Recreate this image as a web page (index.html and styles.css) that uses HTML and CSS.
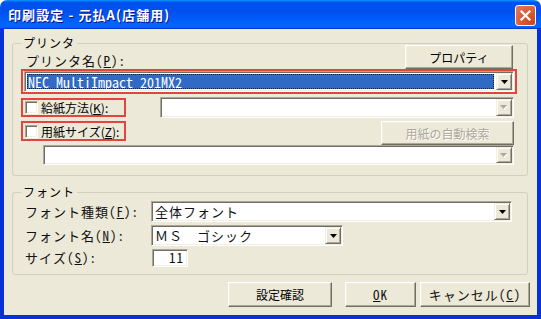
FILE: index.html
```html
<!DOCTYPE html>
<html lang="ja">
<head>
<meta charset="utf-8">
<title>印刷設定</title>
<link rel="stylesheet" href="styles.css">
</head>
<body>
<div class="window">
  <div class="titlebar">
    <span class="title">印刷設定 - 元払A(店舗用)</span>
    <span class="close"><svg width="13" height="13" viewBox="0 0 13 13"><path d="M2.5 2.5 L10.5 10.5 M10.5 2.5 L2.5 10.5" stroke="#fff" stroke-width="2.2" stroke-linecap="square"/></svg></span>
  </div>
  <div class="client">
    <section class="group g1">
      <span class="legend">プリンタ</span>
      <div class="row1">
        <span class="g lbl">プリンタ名(<u>P</u>):</span>
        <span class="btn btn-prop p">プロパティ</span>
      </div>
      <div class="hl combo-hl">
        <div class="combo c-printer">
          <div class="field sel"><span class="mono">NEC MultiImpact 201MX2</span></div>
          <span class="drop"><svg width="7" height="4" viewBox="0 0 7 4"><path d="M0 0H7L3.5 4Z" fill="#000"/></svg></span>
        </div>
      </div>
      <div class="row2">
        <div class="hl chk-hl"><span class="chk"></span><span class="p">給紙方法(<u>K</u>):</span></div>
        <div class="combo c-feed"><div class="field"></div><span class="drop"><svg width="8" height="5" viewBox="0 0 8 5"><path d="M1 1H8L4.5 5Z" fill="#fff"/><path d="M0 0H7L3.5 4Z" fill="#ACA899"/></svg></span></div>
      </div>
      <div class="row3">
        <div class="hl chk-hl"><span class="chk"></span><span class="p">用紙サイズ(<u>Z</u>):</span></div>
        <span class="btn btn-auto p disabled">用紙の自動検索</span>
      </div>
      <div class="combo c-size"><div class="field"></div><span class="drop"><svg width="8" height="5" viewBox="0 0 8 5"><path d="M1 1H8L4.5 5Z" fill="#fff"/><path d="M0 0H7L3.5 4Z" fill="#ACA899"/></svg></span></div>
    </section>

    <section class="group g2">
      <span class="legend">フォント</span>
      <div class="fgrid">
        <span class="g flbl">フォント種類(<u>F</u>):</span>
        <div class="combo c-type"><div class="field g">全体フォント</div><span class="drop"><svg width="7" height="4" viewBox="0 0 7 4"><path d="M0 0H7L3.5 4Z" fill="#000"/></svg></span></div>
        <span class="g flbl">フォント名(<u>N</u>):</span>
        <div class="combo c-name"><div class="field g">ＭＳ　ゴシック</div><span class="drop"><svg width="7" height="4" viewBox="0 0 7 4"><path d="M0 0H7L3.5 4Z" fill="#000"/></svg></span></div>
        <span class="g flbl">サイズ(<u>S</u>):</span>
        <div class="tb g">11</div>
      </div>
    </section>

    <div class="buttons">
      <span class="btn b-check p">設定確認</span>
      <span class="btn b-ok g"><u>O</u>K</span>
      <span class="btn b-cancel g">キャンセル(<u>C</u>)</span>
    </div>
  </div>
</div>
</body>
</html>
```

FILE: styles.css
```css
* { box-sizing: border-box; }
html, body { margin: 0; padding: 0; }
body {
  width: 541px;
  height: 319px;
  overflow: hidden;
  background: #fff;
  font-family: "Noto Sans CJK JP", sans-serif;
  font-size: 12px;
  color: #000;
}
u { text-decoration: underline; text-underline-offset: 1px; }

.g {
  font-family: "Noto Sans Mono CJK JP", "Noto Sans CJK JP", monospace;
  font-size: 13px;
  letter-spacing: 1px;
  color: #111;
}
.p {
  font-family: "Noto Sans CJK JP", sans-serif;
  font-size: 12px;
}
.mono {
  font-family: "Noto Sans Mono CJK JP", "Liberation Mono", monospace;
  font-size: 14px;
  color: #fff;
  line-height: 14px;
}

.window {
  width: 541px;
  height: 319px;
  display: flex;
  flex-direction: column;
}
.titlebar {
  height: 29px;
  flex: none;
  display: flex;
  align-items: center;
  justify-content: space-between;
  padding: 0 5px 0 8px;
  border-radius: 7px 7px 0 0;
  background: linear-gradient(180deg, #0997ff, #0053ee 8%, #0050ee 40%, #0066ff 88%, #0066ff 93%, #005bff 95%, #003dd7 96%, #003dd7);
}
.title {
  color: #fff;
  font-weight: bold;
  font-size: 13px;
  letter-spacing: 1.1px;
  text-shadow: 1px 1px #0f1089;
}
.close {
  width: 21px;
  height: 21px;
  border: 1px solid #fff;
  border-radius: 3px;
  background: radial-gradient(circle at 85% 85%, #cc4622 0%, #d8582f 40%, #e2755a 90%);
  display: flex;
  align-items: center;
  justify-content: center;
  margin-top: 1px;
}

.client {
  flex: 1;
  background: #ece9d8;
  border: 4px solid #0831d9;
  border-top: 0;
  padding: 14px 9px 0 8px;
  display: flex;
  flex-direction: column;
}

.group {
  position: relative;
  border: 1px solid #d0d0bf;
  border-radius: 3px;
  flex: none;
}
.legend {
  position: absolute;
  top: -8px;
  left: 8px;
  padding: 0 2px;
  background: #ece9d8;
  line-height: 14px;
  font-size: 12px;
  letter-spacing: 1px;
}

/* classic 3D edges */
.btn {
  display: flex;
  align-items: center;
  justify-content: center;
  background: #ece9d8;
  border: 1px solid;
  border-color: #fff #716f64 #716f64 #fff;
  box-shadow: inset -1px -1px #aca899, inset 1px 1px #f1efe2;
}
.btn.disabled { color: #aca899; text-shadow: 1px 1px #fff; }

.combo {
  display: flex;
  background: #fff;
  border: 1px solid;
  border-color: #aca899 #fff #fff #aca899;
  box-shadow: inset 1px 1px #716f64, inset -1px -1px #f1efe2;
  padding: 1px;
}
.field {
  flex: 1;
  display: flex;
  align-items: center;
  padding-left: 2px;
  line-height: 14px;
  white-space: nowrap;
}
.drop {
  width: 16px;
  flex: none;
  display: flex;
  align-items: center;
  justify-content: center;
  background: #ece9d8;
  border: 1px solid;
  border-color: #f1efe2 #716f64 #716f64 #f1efe2;
  box-shadow: inset 1px 1px #fff, inset -1px -1px #aca899;
}
.drop svg { display: block; }

.hl { border: 2px solid #e2453f; }

/* printer group */
.g1 {
  height: 133px;
  padding: 1px 13px 0 8px;
  display: flex;
  flex-direction: column;
}
.row1 {
  height: 24px;
  display: flex;
  align-items: flex-end;
  justify-content: space-between;
}
.lbl { padding-left: 5px; line-height: 16px; }
.btn-prop { width: 108px; height: 24px; margin-right: 1px; }

.combo-hl {
  height: 25px;
  margin-right: -3px;
  padding: 0 1px 0 1px;
}
.c-printer { height: 21px; }
.sel {
  background: #316ac5;
  margin: 1px 2px 1px 1px;
  outline: 1px dotted #222;
  outline-offset: -1px;
  padding-left: 1px;
}

.row2 {
  margin-top: 3px;
  height: 21px;
  display: flex;
  align-items: center;
}
.chk-hl {
  width: 105px;
  height: 19px;
  display: flex;
  align-items: center;
  padding-left: 2px;
  flex: none;
}
.chk {
  width: 13px;
  height: 13px;
  background: #fff;
  border: 1px solid;
  border-color: #aca899 #fff #fff #aca899;
  box-shadow: inset 1px 1px #716f64, inset -1px -1px #f1efe2;
  margin-right: 3px;
  flex: none;
}
.c-feed { flex: 1; height: 21px; margin-left: 34px; }

.row3 {
  margin-top: 3px;
  height: 24px;
  display: flex;
  align-items: flex-start;
}
.row3 .chk-hl { height: 20px; }
.btn-auto { width: 133px; height: 24px; margin-left: auto; }

.c-size { height: 20px; margin-left: 22px; }

/* font group */
.g2 {
  margin-top: 16px;
  height: 83px;
  padding: 8px 15px 0 12px;
}
.fgrid {
  display: grid;
  grid-template-columns: 126px auto;
  grid-template-rows: 21px 21px 18px;
  row-gap: 3px;
  align-items: center;
}
.flbl { line-height: 16px; }
.c-type { height: 21px; }
.c-name { height: 21px; width: 192px; }
.tb {
  width: 36px;
  height: 18px;
  margin-left: 1px;
  background: #fff;
  border: 1px solid;
  border-color: #aca899 #fff #fff #aca899;
  box-shadow: inset 1px 1px #716f64, inset -1px -1px #f1efe2;
  text-align: right;
  padding-right: 3px;
  line-height: 16px;
}

.buttons {
  margin-top: 7px;
  margin-right: -2px;
  height: 25px;
  display: flex;
  justify-content: flex-end;
}
.b-check { width: 104px; margin-right: 13px; }
.b-ok { width: 71px; margin-right: 4px; }
.b-cancel { width: 110px; }
```
